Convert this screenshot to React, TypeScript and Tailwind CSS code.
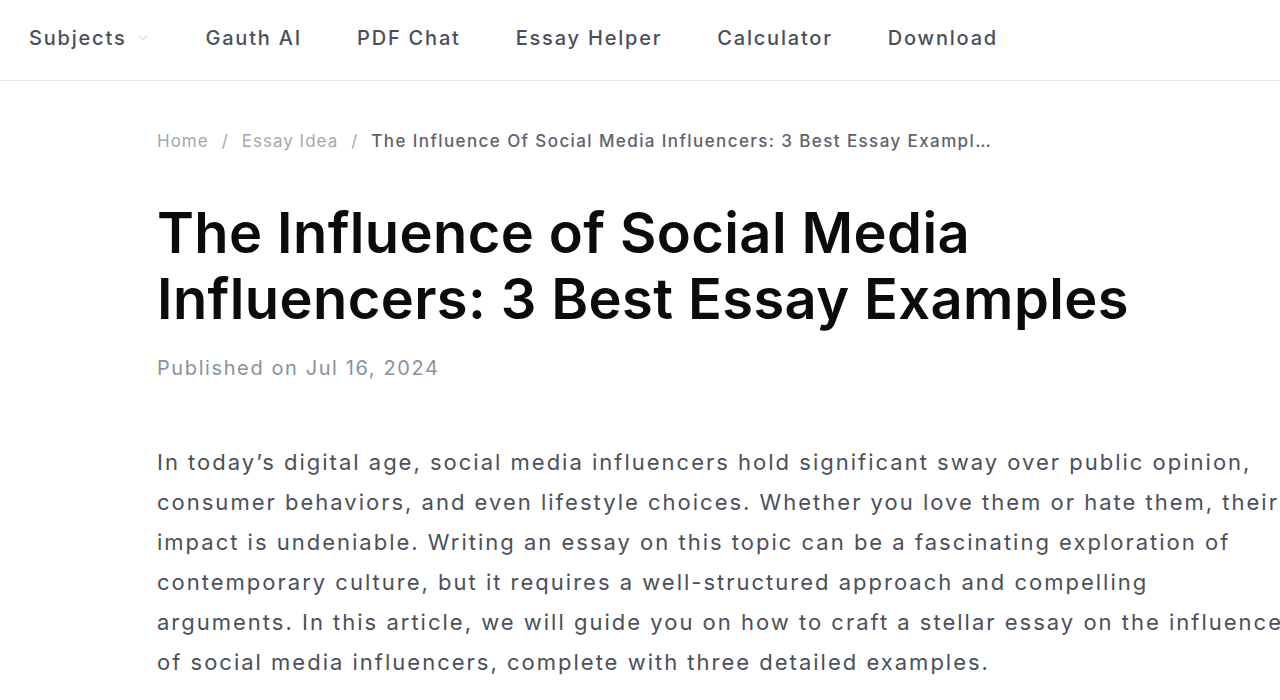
import { ChevronDown } from 'lucide-react';

const navItems = ['Gauth AI', 'PDF Chat', 'Essay Helper', 'Calculator', 'Download'];

const paragraph = [
  'In today’s digital age, social media influencers hold significant sway over public opinion,',
  'consumer behaviors, and even lifestyle choices. Whether you love them or hate them, their',
  'impact is undeniable. Writing an essay on this topic can be a fascinating exploration of',
  'contemporary culture, but it requires a well-structured approach and compelling',
  'arguments. In this article, we will guide you on how to craft a stellar essay on the influence',
  'of social media influencers, complete with three detailed examples.',
];

export default function App() {
  return (
    <div
      className="min-h-[700px] w-full overflow-hidden bg-white"
      style={{ fontFamily: 'Inter, "Noto Sans", sans-serif' }}
    >
      <header className="flex h-[81px] items-center border-b border-[#e8eaee] px-[29px] pb-[5px]">
        <nav className="flex items-center gap-[55px] text-[20px] font-medium tracking-[1.8px] text-[#4a4f5a]">
          <button className="flex items-center gap-[10px] tracking-[1.8px]">
            Subjects
            <ChevronDown className="h-[14px] w-[14px] text-[#b5b9c1]" strokeWidth={1.5} />
          </button>
          {navItems.map((item) => (
            <a key={item} href="#" className="whitespace-nowrap">
              {item}
            </a>
          ))}
        </nav>
      </header>

      <main className="pl-[157px] pt-[48px]">
        <div className="flex items-center whitespace-nowrap text-[17px] leading-[24px] tracking-[1px]">
          <a href="#" className="text-[#a3a8b1]">Home</a>
          <span className="mx-[13px] text-[#a3a8b1]">/</span>
          <a href="#" className="text-[#a3a8b1]">Essay Idea</a>
          <span className="mx-[13px] text-[#a3a8b1]">/</span>
          <span className="max-w-[620px] truncate font-medium tracking-[1.4px] text-[#5d626c]">
            The Influence Of Social Media Influencers: 3 Best Essay Examples
          </span>
        </div>

        <h1 className="mt-[47px] whitespace-nowrap text-[56px] font-semibold leading-[66px] tracking-[0.4px] text-[#0b0b0c]">
          The Influence of Social Media
          <br />
          Influencers: 3 Best Essay Examples
        </h1>

        <p className="mt-[22px] text-[20px] leading-[28px] tracking-[1.6px] text-[#8c919b]">
          Published on Jul 16, 2024
        </p>

        <p className="mt-[60px] whitespace-nowrap text-[22px] leading-[40px] tracking-[2px] text-[#4b5059]">
          {paragraph.map((line, i) => (
            <span key={i}>
              {line}
              {i < paragraph.length - 1 && <br />}
            </span>
          ))}
        </p>
      </main>
    </div>
  );
}
